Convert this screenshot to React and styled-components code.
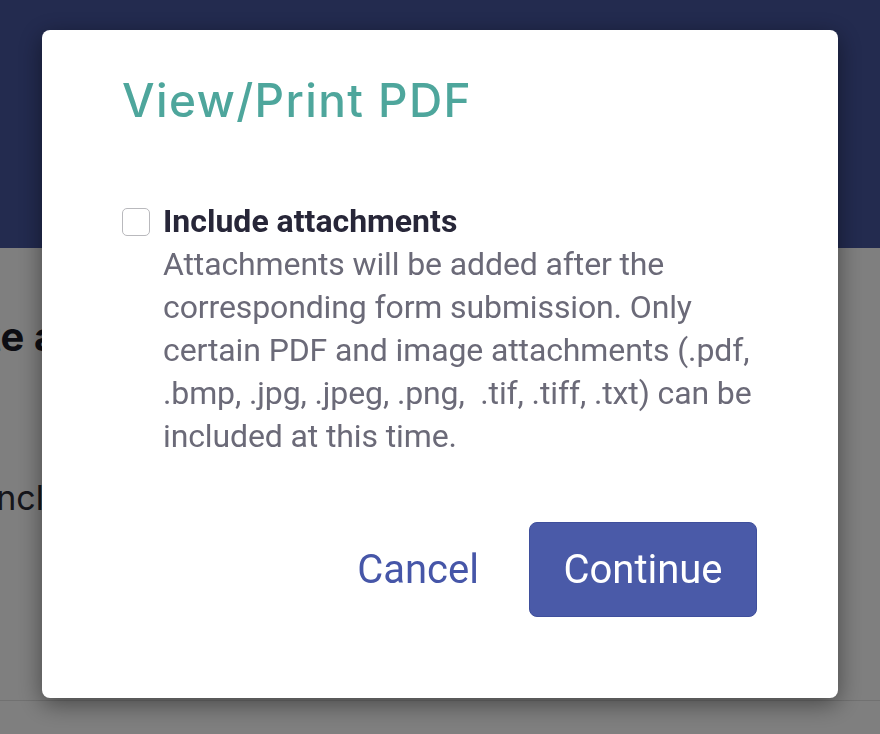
import React, { useState } from "react";
import styled, { createGlobalStyle } from "styled-components";

const GlobalStyle = createGlobalStyle`
  html, body {
    margin: 0;
    padding: 0;
    background: #ffffff;
    overflow: hidden;
  }
  body {
    font-family: Roboto, "Liberation Sans", sans-serif;
  }
`;

const Page = styled.div`
  height: 734px;
  display: flex;
  flex-direction: column;
  overflow: hidden;
`;

const Header = styled.header`
  height: 248px;
  flex-shrink: 0;
  background: #46569f;
`;

const Content = styled.main`
  flex: 1;
  display: flex;
  flex-direction: column;
  border-bottom: 1px solid #e2e2e2;
`;

const PageTitle = styled.h1`
  margin: 64px 0 0 -106px;
  font-family: Inter, "Liberation Sans", sans-serif;
  font-size: 40px;
  font-weight: 700;
  color: #1b1b26;
  white-space: nowrap;
`;

const PageText = styled.p`
  margin: 116px 0 0 -13px;
  font-family: Inter, "Liberation Sans", sans-serif;
  font-size: 34px;
  color: #2c2c36;
  white-space: nowrap;
`;

const Footer = styled.div`
  height: 33px;
  flex-shrink: 0;
`;

const Overlay = styled.div`
  position: fixed;
  inset: 0;
  background: rgba(0, 0, 0, 0.5);
  display: flex;
  justify-content: center;
  align-items: flex-start;
  padding-top: 30px;
`;

const Modal = styled.div`
  width: 796px;
  height: 668px;
  box-sizing: border-box;
  background: #ffffff;
  border-radius: 8px;
  box-shadow: 0 6px 24px rgba(0, 0, 0, 0.45);
  padding: 42px 81px 81px 80px;
  display: flex;
  flex-direction: column;
`;

const Title = styled.h2`
  margin: 0;
  font-family: Inter, "Liberation Sans", sans-serif;
  font-weight: 500;
  font-size: 46px;
  line-height: 56px;
  letter-spacing: 1.4px;
  color: #4ea69c;
`;

const Option = styled.label`
  margin-top: 72px;
  display: flex;
  gap: 13px;
  align-items: flex-start;
  cursor: pointer;
`;

const Box = styled.span`
  flex-shrink: 0;
  width: 28px;
  height: 28px;
  box-sizing: border-box;
  margin-top: 8px;
  border: 1.5px solid ${({ checked }) => (checked ? "#46569f" : "#b9b9bd")};
  background: ${({ checked }) => (checked ? "#46569f" : "#ffffff")};
  border-radius: 5px;
`;

const OptionText = styled.div`
  flex: 1;
  display: flex;
  flex-direction: column;
`;

const OptionTitle = styled.span`
  font-size: 32px;
  font-weight: 700;
  line-height: 43px;
  color: #272638;
`;

const OptionHint = styled.span`
  font-size: 32px;
  line-height: 43px;
  letter-spacing: -0.12px;
  color: #6b6a78;
`;

const Actions = styled.div`
  margin-top: auto;
  display: flex;
  justify-content: flex-end;
  align-items: center;
  gap: 25px;
`;

const Button = styled.button`
  box-sizing: border-box;
  font-family: Roboto, "Liberation Sans", sans-serif;
  font-size: 40px;
  cursor: pointer;
  border-radius: 8px;
  height: 95px;
  padding: 0 ${({ primary }) => (primary ? "0" : "24px")};
  width: ${({ primary }) => (primary ? "228px" : "auto")};
  color: ${({ primary }) => (primary ? "#ffffff" : "#4656a8")};
  background: ${({ primary }) => (primary ? "#4a5aa8" : "transparent")};
  border: 1px solid ${({ primary }) => (primary ? "#3f4f9c" : "transparent")};
`;

export default function App() {
  const [checked, setChecked] = useState(false);

  return (
    <>
      <GlobalStyle />
      <Page>
        <Header />
        <Content>
          <PageTitle>Create a new report</PageTitle>
          <PageText>Include form details</PageText>
        </Content>
        <Footer />
      </Page>
      <Overlay>
        <Modal>
          <Title>View/Print PDF</Title>
          <Option onClick={() => setChecked(!checked)}>
            <Box checked={checked} />
            <OptionText>
              <OptionTitle>Include attachments</OptionTitle>
              <OptionHint>
                Attachments will be added after the corresponding form
                submission. Only certain PDF and image attachments (.pdf,
                .bmp, .jpg, .jpeg, .png,&nbsp; .tif, .tiff, .txt) can be
                included at this time.
              </OptionHint>
            </OptionText>
          </Option>
          <Actions>
            <Button>Cancel</Button>
            <Button primary>Continue</Button>
          </Actions>
        </Modal>
      </Overlay>
    </>
  );
}
